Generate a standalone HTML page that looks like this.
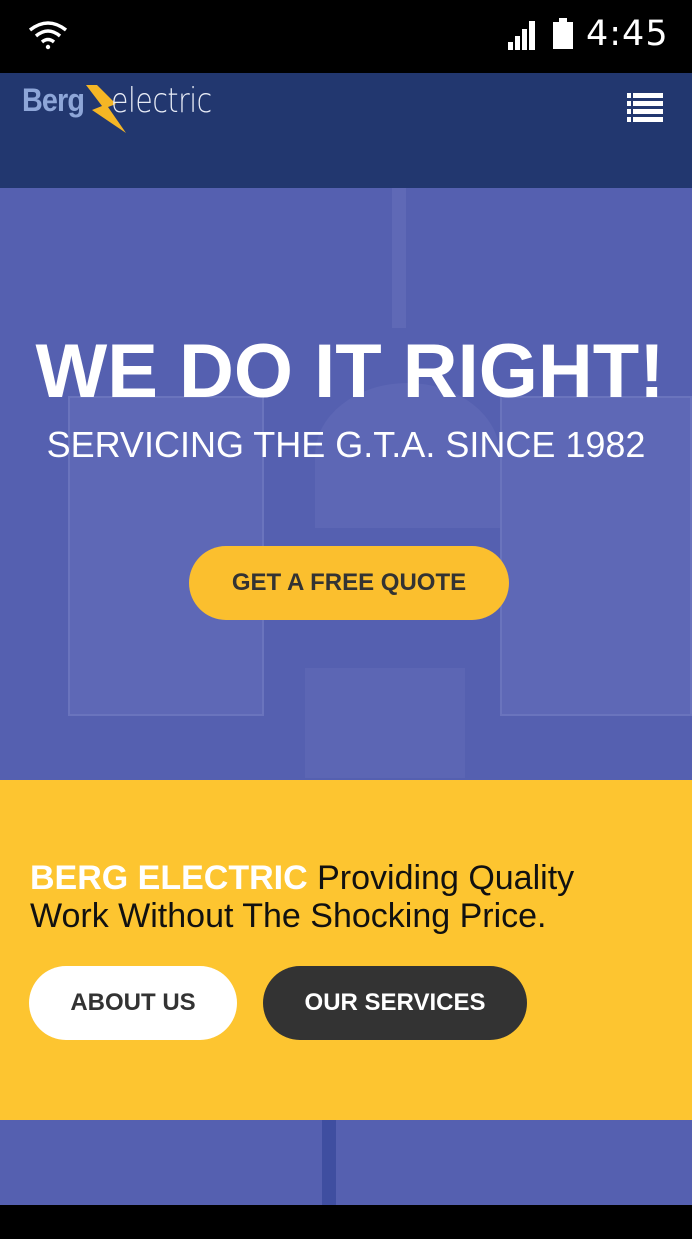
<!DOCTYPE html>
<html><head><meta charset="utf-8"><style>
*{margin:0;padding:0;box-sizing:border-box}
body{width:692px;height:1239px;overflow:hidden;background:#000;font-family:"Liberation Sans",Arial,sans-serif;position:relative}
.abs{position:absolute}
</style></head><body>
<!-- status bar -->
<div class="abs" style="left:0;top:0;width:692px;height:73px;background:#000"></div>
<svg class="abs" style="left:28px;top:20px" width="40" height="30" viewBox="0 0 40 30">
<path d="M2 10 Q20 -4 38 10" stroke="#fff" stroke-width="3.5" fill="none"/>
<path d="M8 16 Q20 6 32 16" stroke="#fff" stroke-width="3.5" fill="none"/>
<path d="M14 22 Q20 17 26 22" stroke="#fff" stroke-width="3.5" fill="none"/>
<circle cx="20" cy="27" r="2.2" fill="#fff"/></svg>
<svg class="abs" style="left:508px;top:20px" width="30" height="30" viewBox="0 0 30 30"><g fill="#fff"><rect x="0" y="22" width="5" height="8"/><rect x="7" y="16" width="5" height="14"/><rect x="14" y="9" width="5" height="21"/><rect x="21" y="1" width="6" height="29"/></g></svg>
<div class="abs" style="left:553px;top:22px;width:20px;height:27px;background:#fff"></div>
<div class="abs" style="left:559px;top:18px;width:8px;height:5px;background:#fff"></div>
<div class="abs" style="left:586px;top:14px;color:#fff;font-family:'DejaVu Sans',sans-serif;font-size:35px;letter-spacing:1px">4:45</div>
<!-- header -->
<div class="abs" style="left:0;top:73px;width:692px;height:115px;background:#22376f"></div>
<div class="abs" style="left:22px;top:82px;color:#8ea6d8;font-weight:bold;font-size:32px;letter-spacing:-1px;transform:scaleX(0.9);transform-origin:left">Berg</div>
<svg class="abs" style="left:86px;top:84px" width="42" height="52" viewBox="0 0 42 52"><path d="M0 1 L11 1 L30 20 L22 23 L40 49 L6 26 L16 22 Z" fill="#f5b625"/></svg>
<div class="abs" style="left:111px;top:81px;color:#e8ecf6;font-size:34px;font-family:'DejaVu Sans',sans-serif;font-weight:200;letter-spacing:-0.5px;transform:scaleX(0.83);transform-origin:left">electric</div>
<svg class="abs" style="left:627px;top:93px" width="36" height="30" viewBox="0 0 36 30"><g fill="#fff"><rect x="0" y="0" width="4" height="5"/><rect x="6" y="0" width="30" height="5"/><rect x="0" y="8" width="4" height="5"/><rect x="6" y="8" width="30" height="5"/><rect x="0" y="16" width="4" height="5"/><rect x="6" y="16" width="30" height="5"/><rect x="0" y="24" width="4" height="5"/><rect x="6" y="24" width="30" height="5"/></g></svg>
<!-- hero -->
<div class="abs" style="left:0;top:188px;width:692px;height:592px;background:#5560b0;overflow:hidden">
<div class="abs" style="left:68px;top:208px;width:196px;height:320px;background:#5e68b6;border:2px solid #6a74bd"></div>
<div class="abs" style="left:500px;top:208px;width:192px;height:320px;background:#5e68b6;border:2px solid #6a74bd"></div>
<div class="abs" style="left:305px;top:480px;width:160px;height:110px;background:#5c66b4"></div>
<div class="abs" style="left:392px;top:0;width:14px;height:140px;background:#5f69b6"></div>
<div class="abs" style="left:315px;top:195px;width:185px;height:145px;background:#5d67b5;border-radius:50% 50% 0 0"></div>
</div>
<div class="abs" style="left:4px;top:328px;width:692px;text-align:center;color:#fff;font-weight:bold;font-size:76px;letter-spacing:0px">WE DO IT RIGHT!</div>
<div class="abs" style="left:0;top:424px;width:692px;text-align:center;color:#fff;font-size:36px">SERVICING THE G.T.A. SINCE 1982</div>
<div class="abs" style="left:189px;top:546px;width:320px;height:74px;border-radius:37px;background:#fbbf2e;color:#333;font-weight:bold;font-size:24px;line-height:74px;text-align:center">GET A FREE QUOTE</div>
<!-- yellow -->
<div class="abs" style="left:0;top:780px;width:692px;height:340px;background:#fdc530"></div>
<div class="abs" style="left:30px;top:859px;color:#111;font-size:34px;line-height:38px;width:660px"><b style="color:#fff">BERG ELECTRIC</b> Providing Quality<br>Work Without The Shocking Price.</div>
<div class="abs" style="left:29px;top:966px;width:208px;height:74px;border-radius:37px;background:#fff;color:#333;font-weight:bold;font-size:24px;line-height:74px;text-align:center">ABOUT US</div>
<div class="abs" style="left:263px;top:966px;width:264px;height:74px;border-radius:37px;background:#333;color:#fff;font-weight:bold;font-size:24px;line-height:74px;text-align:center">OUR SERVICES</div>
<!-- bottom -->
<div class="abs" style="left:0;top:1120px;width:692px;height:85px;background:#5560b0"></div>
<div class="abs" style="left:322px;top:1120px;width:14px;height:85px;background:#3f4ea0"></div>
<div class="abs" style="left:0;top:1205px;width:692px;height:34px;background:#000"></div>
</body></html>
